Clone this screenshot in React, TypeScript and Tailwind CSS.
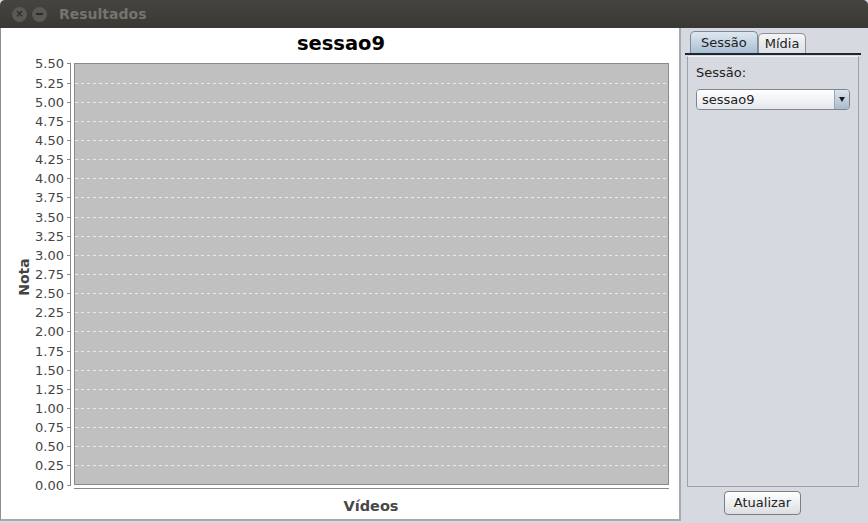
import React from 'react';

const TICKS = Array.from({ length: 23 }, (_, i) => i * 0.25);
const yOf = (v: number) => 455.5 - (v / 0.25) * 19.14;

const Chart: React.FC = () => (
  <svg width={680} height={491} className="block" style={{ fontFamily: '"DejaVu Sans", sans-serif' }}>
    <text x={340} y={21} textAnchor="middle" fontSize={19.5} fontWeight="bold" fill="#000">
      sessao9
    </text>
    {/* plot background */}
    <rect x={73.5} y={34.5} width={594} height={421} fill="#c0c0c0" stroke="#8a8a8a" />
    {TICKS.slice(1, -1).map((v) => (
      <line
        key={v}
        x1={74}
        x2={667}
        y1={Math.round(yOf(v)) + 0.5}
        y2={Math.round(yOf(v)) + 0.5}
        stroke="#ffffff"
        strokeOpacity={0.65}
        strokeDasharray="3 3"
      />
    ))}
    {/* range axis */}
    <line x1={69.5} x2={69.5} y1={34} y2={456} stroke="#888" />
    {TICKS.map((v) => {
      const y = Math.round(yOf(v)) + 0.5;
      return (
        <g key={v}>
          <line x1={66} x2={70} y1={y} y2={y} stroke="#888" />
          <text x={63} y={y + 4.5} textAnchor="end" fontSize={13} fill="#444">
            {v.toFixed(2)}
          </text>
        </g>
      );
    })}
    {/* domain axis */}
    <line x1={73} x2={668} y1={459.5} y2={459.5} stroke="#888" />
    <text x={370} y={482} textAnchor="middle" fontSize={14.5} fontWeight="bold" fill="#484848">
      Vídeos
    </text>
    <text
      x={0}
      y={0}
      transform="translate(28 248) rotate(-90)"
      textAnchor="middle"
      fontSize={14}
      fontWeight="bold"
      fill="#444"
    >
      Nota
    </text>
  </svg>
);

const App: React.FC = () => {
  return (
    <div
      className="w-[868px] h-[523px] bg-[#d6d9df] flex flex-col overflow-hidden text-[#222]"
      style={{ fontFamily: '"DejaVu Sans", sans-serif' }}
    >
      {/* title bar */}
      <div className="h-[28px] shrink-0 bg-gradient-to-b from-[#45443f] to-[#393834] flex items-center pl-[12px] gap-[5px] rounded-t-[5px]">
        <div className="w-[15px] h-[15px] rounded-full bg-[#5a5954] flex items-center justify-center text-[#2c2b28] text-[10px] leading-none font-bold">
          ×
        </div>
        <div className="w-[15px] h-[15px] rounded-full bg-[#5a5954] flex items-center justify-center">
          <div className="w-[7px] h-[2px] bg-[#2c2b28]" />
        </div>
        <span className="ml-[7px] text-[14px] font-bold text-[#76746e]">Resultados</span>
      </div>

      <div className="flex flex-1 min-h-0">
        {/* chart panel */}
        <div className="w-[681px] h-[493px] bg-white border-l border-[#8e8e8e] border-b-2 border-b-[#a8a8a8] border-r-2 border-r-[#a7a9ad] pt-[1px]">
          <Chart />
        </div>

        {/* side panel */}
        <div className="flex-1 flex flex-col pl-[4px] pr-[7px] pt-[5px]">
          <div className="flex items-end h-[22px] pl-[5px] border-b-2 border-[#1c2733]">
            <div className="h-[22px] px-[10px] rounded-t-[5px] border border-b-0 border-[#7d8a96] bg-gradient-to-b from-[#dfe8f1] to-[#a9bfd3] text-[13px] leading-[21px]">
              Sessão
            </div>
            <div className="h-[20px] px-[6px] rounded-t-[5px] border border-b-0 border-[#8e9298] bg-gradient-to-b from-[#f4f5f7] to-[#dde0e5] text-[13px] leading-[19px]">
              Mídia
            </div>
          </div>
          <div className="mx-[2px] mt-[1px] h-[431px] border border-[#9ea2a8] border-t-[#f2f3f5] px-[8px] pt-[8px]">
            <div className="text-[13px] leading-[16px] text-[#222]">Sessão:</div>
            <div className="mt-[8px] h-[21px] flex rounded-[4px] border border-[#7e858c] overflow-hidden">
              <div className="flex-1 bg-gradient-to-b from-white to-[#e4e7eb] text-[13px] leading-[19px] pl-[5px]">
                sessao9
              </div>
              <div className="w-[15px] border-l border-[#9aa6b2] bg-gradient-to-b from-[#dbe4ec] to-[#a9bccd] flex items-center justify-center">
                <div className="w-0 h-0 border-l-[3.5px] border-r-[3.5px] border-t-[5px] border-l-transparent border-r-transparent border-t-[#1b1b1b]" />
              </div>
            </div>
          </div>
          <div className="flex pt-[4px] pl-[39px]">
            <div className="w-[77px] h-[24px] rounded-[4px] border border-[#7b7f85] bg-gradient-to-b from-white to-[#dcdee2] text-[13px] leading-[22px] text-center">
              Atualizar
            </div>
          </div>
        </div>
      </div>
    </div>
  );
};

export default App;
